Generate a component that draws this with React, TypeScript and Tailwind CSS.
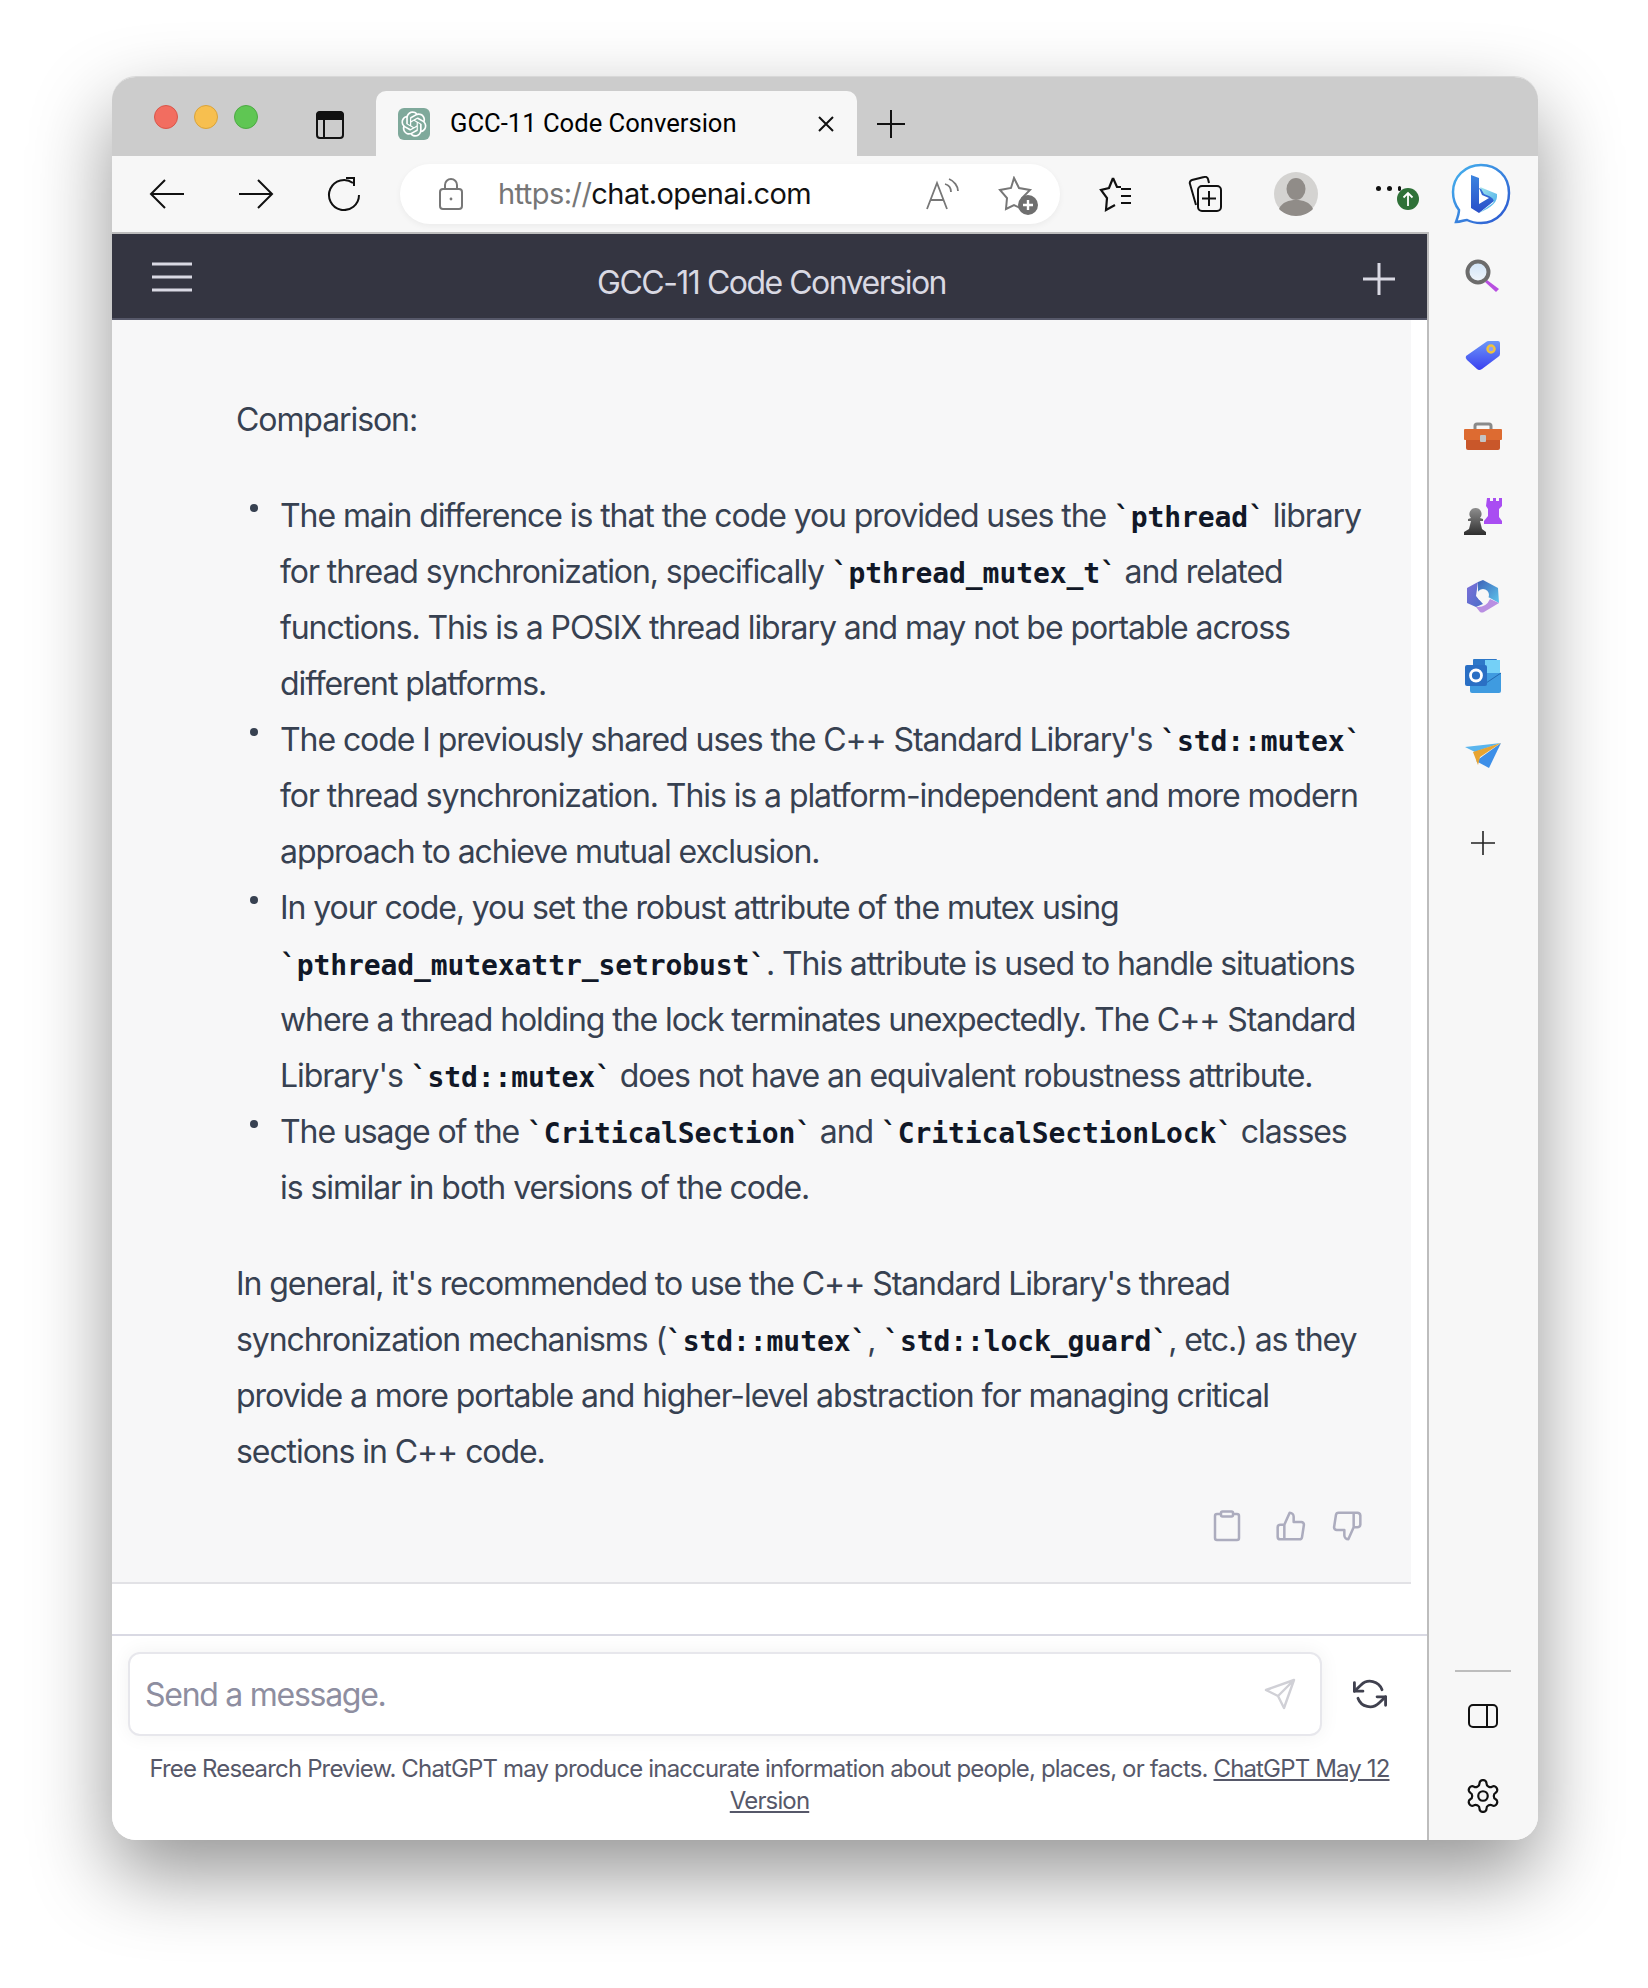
import type { ReactNode } from "react";

const openAiPath =
  "M37.5324 16.8707C37.9808 15.5241 38.1363 14.0974 37.9886 12.6859C37.8409 11.2744 37.3934 9.91076 36.676 8.68622C35.6126 6.83404 33.9882 5.3676 32.0373 4.4985C30.0864 3.62941 27.9098 3.40259 25.8215 3.85078C24.8796 2.7893 23.7219 1.94125 22.4257 1.36341C21.1295 0.785575 19.7249 0.491269 18.3058 0.500197C16.1708 0.495044 14.0893 1.16803 12.3614 2.42214C10.6335 3.67624 9.34853 5.44666 8.6917 7.47815C7.30085 7.76286 5.98686 8.3414 4.8377 9.17505C3.68854 10.0087 2.73073 11.0782 2.02839 12.312C0.956464 14.1591 0.498905 16.2988 0.721698 18.4228C0.944492 20.5467 1.83612 22.5449 3.268 24.1293C2.81966 25.4759 2.66413 26.9026 2.81182 28.3141C2.95951 29.7256 3.40701 31.0892 4.12437 32.3138C5.18791 34.1659 6.8123 35.6322 8.76321 36.5013C10.7141 37.3704 12.8907 37.5973 14.9789 37.1492C15.9208 38.2107 17.0786 39.0587 18.3747 39.6366C19.6709 40.2144 21.0755 40.5087 22.4946 40.4998C24.6307 40.5054 26.7133 39.8321 28.4418 38.5772C30.1704 37.3223 31.4556 35.5506 32.1119 33.5179C33.5027 33.2332 34.8167 32.6547 35.9659 31.821C37.115 30.9874 38.0728 29.9178 38.7752 28.684C39.8458 26.8371 40.3023 24.6979 40.0789 22.5748C39.8556 20.4517 38.9639 18.4544 37.5324 16.8707ZM22.4978 37.8849C20.7443 37.8874 19.0459 37.2733 17.6994 36.1501C17.7601 36.117 17.8666 36.0586 17.936 36.0161L25.9004 31.4156C26.1003 31.3019 26.2663 31.137 26.3813 30.9378C26.4964 30.7386 26.5563 30.5124 26.5549 30.2825V19.0542L29.9213 20.998C29.9389 21.0068 29.9541 21.0198 29.9656 21.0359C29.977 21.052 29.9842 21.0707 29.9867 21.0902V30.3889C29.9842 32.375 29.1946 34.2791 27.7909 35.6841C26.3872 37.0892 24.4838 37.8806 22.4978 37.8849ZM6.39227 31.0064C5.51397 29.4888 5.19742 27.7107 5.49804 25.9832C5.55718 26.0187 5.66048 26.0818 5.73461 26.1244L13.699 30.7248C13.8975 30.8408 14.1233 30.902 14.3532 30.902C14.583 30.902 14.8088 30.8408 15.0073 30.7248L24.731 25.1103V28.9979C24.7321 29.0177 24.7283 29.0376 24.7199 29.0556C24.7115 29.0736 24.6988 29.0893 24.6829 29.1012L16.6317 33.7497C14.9096 34.7416 12.8643 35.0097 10.9447 34.4954C9.02506 33.9811 7.38785 32.7263 6.39227 31.0064ZM4.29707 13.6194C5.17156 12.0998 6.55279 10.9364 8.19885 10.3327C8.19885 10.4013 8.19491 10.5228 8.19491 10.6071V19.808C8.19351 20.0378 8.25334 20.2638 8.36823 20.4629C8.48312 20.6619 8.64893 20.8267 8.84863 20.9404L18.5723 26.5542L15.206 28.4979C15.1894 28.5089 15.1703 28.5155 15.1505 28.5173C15.1307 28.5191 15.1107 28.516 15.0924 28.5082L7.04046 23.8557C5.32135 22.8601 4.06716 21.2235 3.55289 19.3046C3.03862 17.3858 3.30624 15.3413 4.29707 13.6194ZM31.955 20.0556L22.2312 14.4411L25.5976 12.4981C25.6142 12.4872 25.6333 12.4805 25.6531 12.4787C25.6729 12.4769 25.6928 12.4801 25.7111 12.4879L33.7631 17.1364C34.9967 17.849 36.0017 18.8982 36.6606 20.1613C37.3194 21.4244 37.6047 22.849 37.4832 24.2684C37.3617 25.6878 36.8382 27.0432 35.9743 28.1759C35.1103 29.3086 33.9415 30.1717 32.6047 30.6641C32.6047 30.5947 32.6047 30.4733 32.6047 30.3889V21.188C32.6066 20.9586 32.5474 20.7328 32.4332 20.5338C32.319 20.3348 32.154 20.1698 31.955 20.0556ZM35.3055 15.0128C35.2464 14.9765 35.1431 14.9142 35.069 14.8717L27.1045 10.2712C26.906 10.1554 26.6803 10.0943 26.4504 10.0943C26.2206 10.0943 25.9948 10.1554 25.7963 10.2712L16.0726 15.8858V11.9982C16.0715 11.9783 16.0753 11.9585 16.0837 11.9405C16.0921 11.9225 16.1048 11.9068 16.1207 11.8949L24.1719 7.25025C25.4053 6.53903 26.8158 6.19376 28.2383 6.25482C29.6608 6.31589 31.0364 6.78077 32.2044 7.59508C33.3723 8.40939 34.2842 9.53945 34.8334 10.8531C35.3826 12.1667 35.5464 13.6095 35.3055 15.0128ZM14.2424 21.9419L10.8752 19.9981C10.8576 19.9893 10.8423 19.9763 10.8309 19.9602C10.8195 19.9441 10.8122 19.9254 10.8098 19.9058V10.6071C10.8107 9.18295 11.2173 7.78848 11.9819 6.58696C12.7466 5.38544 13.8377 4.42659 15.1275 3.82264C16.4173 3.21869 17.8524 2.99464 19.2649 3.1767C20.6775 3.35876 22.0089 3.93941 23.1034 4.85067C23.0427 4.88379 22.937 4.94215 22.8668 4.98473L14.9024 9.58517C14.7025 9.69878 14.5366 9.86356 14.4215 10.0626C14.3065 10.2616 14.2466 10.4877 14.2479 10.7175L14.2424 21.9419ZM16.071 17.9991L20.4018 15.4978L24.7325 17.9975V22.9985L20.4018 25.4983L16.071 22.9985V17.9991Z";

function Code({ children }: { children: ReactNode }) {
  return (
    <code className="font-['DejaVu_Sans_Mono',monospace] text-[28px] font-bold leading-[1] tracking-[-0.1px] text-[#111827]">
      `{children}`
    </code>
  );
}

function Bullet({ children }: { children: ReactNode }) {
  return (
    <li className="relative whitespace-nowrap">
      <span className="absolute left-[-30px] top-[16px] h-2 w-2 rounded-full bg-[#374151]" />
      {children}
    </li>
  );
}

function Slot({ w, children }: { w: number; children: ReactNode }) {
  return (
    <div className="flex shrink-0 items-center justify-center" style={{ width: w }}>
      {children}
    </div>
  );
}

function Toolbar() {
  return (
    <div className="flex h-[76px] items-center bg-[#f7f7f7] pl-[20px]">
      <Slot w={70}>
        <svg width="36" height="30" viewBox="0 0 36 30" fill="none" stroke="#111" strokeWidth="2">
          <path d="M35 15H2M16 1 2 15l14 14" />
        </svg>
      </Slot>
      <Slot w={108}>
        <svg width="36" height="30" viewBox="0 0 36 30" fill="none" stroke="#111" strokeWidth="2">
          <path d="M1 15h33M20 1l14 14-14 14" />
        </svg>
      </Slot>
      <Slot w={68}>
        <svg width="34" height="34" viewBox="0 0 34 34" fill="none" stroke="#111" strokeWidth="2">
          <path d="M26 6A15 15 0 1 0 32 18" />
          <path d="M19 1h8v8" />
        </svg>
      </Slot>
      <div className="ml-[22px] flex h-[60px] w-[660px] shrink-0 items-center rounded-full bg-white shadow-[0_2px_6px_rgba(0,0,0,0.05)]">
        <div className="ml-[38px] flex w-[26px] justify-center">
          <svg width="24" height="32" viewBox="0 0 24 32" fill="none" stroke="#777" strokeWidth="2">
            <rect x="1" y="11" width="22" height="20" rx="3" />
            <path d="M6 11V7a6 6 0 0 1 12 0v4" />
            <circle cx="12" cy="21" r="1.4" fill="#777" stroke="none" />
          </svg>
        </div>
        <div className="ml-[34px] font-['Inter',sans-serif] text-[29px] tracking-[-0.55px] text-[#111]">
          <span className="text-[#767676]">https://</span>chat.openai.com
        </div>
        <div className="ml-auto flex items-center">
          <svg width="34" height="34" viewBox="0 0 34 34" fill="none" stroke="#777" strokeWidth="1.8">
            <path d="M1 32 11 6l10 26M5 23h12" />
            <path d="M19 7c4 1 6 4 6 8M23 2c5 2 9 7 9 12" />
          </svg>
          <div className="relative ml-[38px] mr-[26px] h-[36px] w-[36px]">
            <svg width="36" height="36" viewBox="0 0 36 36" fill="none" stroke="#777" strokeWidth="2">
              <path d="M16 2l5 10 11 2-8 8 2 12-10-5-8 4 1-11-7-8 11-2z" />
            </svg>
            <svg className="absolute bottom-[-3px] right-[-4px]" width="20" height="20" viewBox="0 0 20 20">
              <circle cx="10" cy="10" r="10" fill="#6f6f6f" />
              <path d="M10 5v10M5 10h10" stroke="#fff" strokeWidth="2.4" />
            </svg>
          </div>
        </div>
      </div>
      <Slot w={114}>
        <svg width="36" height="36" viewBox="0 0 36 36" fill="none" stroke="#111" strokeWidth="2.2">
          <path d="M14 2l4 9h4M14 2l-4 10-8 2 6 8-1 12 9-5M22 13h10M22 20h10M22 27h10" />
        </svg>
      </Slot>
      <Slot w={62}>
        <svg width="36" height="36" viewBox="0 0 36 36" fill="none" stroke="#111" strokeWidth="2">
          <path d="M9 29 3 8a3 3 0 0 1 2-4l12-3a3 3 0 0 1 4 2l1 4" />
          <rect x="11" y="10" width="23" height="25" rx="4" />
          <path d="M22 15v15M15 22.500h14" />
        </svg>
      </Slot>
      <Slot w={120}>
        <svg width="44" height="44" viewBox="0 0 44 44">
          <circle cx="22" cy="22" r="22" fill="#d4d3d1" />
          <ellipse cx="22" cy="17" rx="9.500" ry="11" fill="#908c88" />
          <path d="M5 37c3-7 10-9 17-9s14 2 17 9c-4 4-10 7-17 7S9 41 5 37z" fill="#908c88" />
        </svg>
      </Slot>
      <Slot w={78}>
        <div className="relative h-[36px] w-[44px]">
          <div className="absolute left-[3px] top-[10px] flex gap-[6px]">
            <span className="h-[5px] w-[5px] rounded-full bg-[#111]" />
            <span className="h-[5px] w-[5px] rounded-full bg-[#111]" />
            <span className="h-[5px] w-[3px] rounded-full bg-[#111]" />
          </div>
          <svg className="absolute left-[24px] top-[12px]" width="22" height="22" viewBox="0 0 22 22">
            <circle cx="11" cy="11" r="11" fill="#2f7138" />
            <path d="M11 18V5M6.500 9.500 11 5l4.500 4.500" stroke="#fff" strokeWidth="1.8" fill="none" />
          </svg>
        </div>
      </Slot>
      <Slot w={94}>
        <svg width="62" height="62" viewBox="0 0 62 62" fill="none">
          <defs>
            <linearGradient id="bubble" x1="0" y1="0" x2="1" y2="1">
              <stop offset="0" stopColor="#46b4ee" />
              <stop offset="1" stopColor="#2c55cf" />
            </linearGradient>
            <linearGradient id="bingB" x1="0" y1="0" x2="0" y2="1">
              <stop offset="0" stopColor="#3b84e0" />
              <stop offset="1" stopColor="#2a4fc8" />
            </linearGradient>
            <linearGradient id="bingC" x1="0" y1="0" x2="1" y2="1">
              <stop offset="0" stopColor="#a5e6ea" />
              <stop offset="1" stopColor="#3fa8ec" />
            </linearGradient>
          </defs>
          <path
            d="M31 2C15 2 3 14 3 29c0 7 2 13 6 18 0 4-2 9-3 12 5 0 8-2 11-2 4 2 9 3 14 3 16 0 28-13 28-30S47 2 31 2z"
            fill="#fff"
            stroke="url(#bubble)"
            strokeWidth="2.5"
          />
          <path d="M21 12l8 3v26l10-6-7-3-3-7 15 6v7L29 50l-8-5z" fill="url(#bingB)" />
          <path d="M30 24l17 7c1 8-5 13-18 19l14-10c2-3 0-6-9-9z" fill="url(#bingC)" />
        </svg>
      </Slot>
    </div>
  );
}

function SideIcon({ children }: { children: ReactNode }) {
  return <div className="flex h-[80px] items-center justify-center">{children}</div>;
}

function Sidebar() {
  return (
    <aside className="flex w-[111px] shrink-0 flex-col items-stretch border-l-[2px] border-[#bdbdbd] bg-[#f7f7f7] pr-[1px] pt-[4px]">
      <SideIcon>
        <svg width="36" height="34" viewBox="0 0 36 34">
          <defs>
            <linearGradient id="lens" x1="0" y1="0" x2="0" y2="1">
              <stop offset="0" stopColor="#cfe3f7" />
              <stop offset="1" stopColor="#f1f6fb" />
            </linearGradient>
          </defs>
          <path d="M22 21l12 9-3 3-11-10z" fill="#b84fe0" />
          <circle cx="13" cy="13" r="10.500" fill="url(#lens)" stroke="#6c6c6c" strokeWidth="4" />
        </svg>
      </SideIcon>
      <SideIcon>
        <svg width="36" height="32" viewBox="0 0 36 32">
          <defs>
            <linearGradient id="tag" x1="0" y1="0" x2="0" y2="1">
              <stop offset="0" stopColor="#6c97f8" />
              <stop offset="1" stopColor="#3a3ff0" />
            </linearGradient>
          </defs>
          <path d="M1 16 21 2q1-1 3-1h9q2 0 2 2v11q0 2-2 3L17 29q-3 2-5 0L2 20q-2-2-1-4z" fill="url(#tag)" />
          <circle cx="26" cy="9" r="3.500" fill="#8ea0f5" stroke="#eec23d" strokeWidth="2.500" />
        </svg>
      </SideIcon>
      <SideIcon>
        <svg width="38" height="28" viewBox="0 0 38 28">
          <path d="M11 8V4q0-2 2-2h12q2 0 2 2v4" fill="none" stroke="#8a8a8a" strokeWidth="3" />
          <rect x="2" y="14" width="34" height="14" rx="2" fill="#c9572a" />
          <rect x="0" y="7" width="38" height="11" rx="1" fill="#dd6b31" />
          <rect x="16" y="13" width="6" height="7" rx="1" fill="#c4c4c4" />
        </svg>
      </SideIcon>
      <SideIcon>
        <svg width="40" height="40" viewBox="0 0 40 40">
          <defs>
            <linearGradient id="pawn" x1="0" y1="0" x2="0" y2="1">
              <stop offset="0" stopColor="#8f8f8f" />
              <stop offset="1" stopColor="#2e2e2e" />
            </linearGradient>
          </defs>
          <path d="M24 2h3v3h3V2h3v3h3V2h3v8l-3 3v8l3 4v3H21v-3l4-5v-7l-2-3z" fill="#a94df2" />
          <path d="M13 12a6 6 0 0 1 4 10l3 1v2h-3l2 8 4 3v3H1v-3l5-3 2-8H5v-2l3-1a6 6 0 0 1 5-10z" fill="url(#pawn)" />
        </svg>
      </SideIcon>
      <SideIcon>
        <svg width="34" height="34" viewBox="0 0 34 34">
          <defs>
            <linearGradient id="m1" x1="0" y1="0" x2="1" y2="1">
              <stop offset="0" stopColor="#7d6fd8" />
              <stop offset="1" stopColor="#4a6ec9" />
            </linearGradient>
            <linearGradient id="m2" x1="0" y1="0" x2="1" y2="1">
              <stop offset="0" stopColor="#3d62b8" />
              <stop offset="1" stopColor="#5dc6ec" />
            </linearGradient>
          </defs>
          <path d="M12 3 1 9v15l9 4 7-3-7-8z" fill="url(#m1)" />
          <path d="M12 3l5-2 15 8 1 15-9-5-8-4-4 1z" fill="url(#m2)" />
          <path d="M33 24l-15 9q-2 1-4 0l-4-5q10 1 14-8z" fill="#b98fe2" />
          <circle cx="17" cy="16" r="6" fill="#f7f7f7" />
        </svg>
      </SideIcon>
      <SideIcon>
        <svg width="36" height="34" viewBox="0 0 36 34">
          <rect x="8" y="0" width="24" height="16" rx="1" fill="#2d78c8" />
          <rect x="20" y="1" width="15" height="15" fill="#74d0f7" />
          <path d="M5 14h31v18q0 2-2 2H7q-2 0-2-2z" fill="#3f9be0" />
          <path d="M5 14l16 10 15-10" fill="none" stroke="#2368b0" strokeWidth="1" />
          <rect x="0" y="6" width="22" height="21" rx="2" fill="#2a6fc4" />
          <circle cx="11" cy="16.500" r="5.500" fill="none" stroke="#fff" strokeWidth="2.800" />
        </svg>
      </SideIcon>
      <SideIcon>
        <svg width="36" height="26" viewBox="0 0 36 26">
          <path d="M0 4 36 0 10 9z" fill="#5ab5ee" />
          <path d="M36 0 24 25l-13-7z" fill="#3d8fe8" />
          <path d="M36 0 8 9l5 13 2-8z" fill="#e8a431" />
        </svg>
      </SideIcon>
      <div className="flex h-[94px] items-center justify-center">
        <svg width="24" height="24" viewBox="0 0 24 24" stroke="#222" strokeWidth="1.600">
          <path d="M12 0v24M0 12h24" />
        </svg>
      </div>
      <div className="mt-auto flex flex-col items-center pb-[8px]">
        <div className="h-[2px] w-[56px] bg-[#bdbdbd]" />
        <div className="flex h-[88px] items-center justify-center">
          <svg width="30" height="24" viewBox="0 0 30 24" fill="none" stroke="#111" strokeWidth="2">
            <rect x="1" y="1" width="28" height="22" rx="4" />
            <path d="M19 1v22" />
          </svg>
        </div>
        <div className="flex h-[72px] items-center justify-center">
          <svg width="38" height="38" viewBox="0 0 24 24" fill="none" stroke="#111" strokeWidth="1.400">
            <path d="M12.220 2h-.44a2 2 0 0 0-2 2v.18a2 2 0 0 1-1 1.730l-.43.25a2 2 0 0 1-2 0l-.15-.08a2 2 0 0 0-2.730.73l-.22.38a2 2 0 0 0 .73 2.730l.15.1a2 2 0 0 1 1 1.720v.510a2 2 0 0 1-1 1.740l-.15.09a2 2 0 0 0-.73 2.730l.22.38a2 2 0 0 0 2.730.73l.15-.08a2 2 0 0 1 2 0l.43.25a2 2 0 0 1 1 1.730V20a2 2 0 0 0 2 2h.44a2 2 0 0 0 2-2v-.18a2 2 0 0 1 1-1.730l.43-.25a2 2 0 0 1 2 0l.15.08a2 2 0 0 0 2.730-.73l.22-.39a2 2 0 0 0-.73-2.730l-.15-.08a2 2 0 0 1-1-1.740v-.5a2 2 0 0 1 1-1.740l.15-.09a2 2 0 0 0 .73-2.730l-.22-.38a2 2 0 0 0-2.730-.73l-.15.08a2 2 0 0 1-2 0l-.43-.25a2 2 0 0 1-1-1.730V4a2 2 0 0 0-2-2z" />
            <circle cx="12" cy="12" r="3" />
          </svg>
        </div>
      </div>
    </aside>
  );
}

function Article() {
  return (
    <div className="mr-[16px] flex h-[1264px] flex-col border-b-[2px] border-[#e2e2e6] bg-[#f7f7f8] pl-[124px] pt-[72px] text-[32px] leading-[56px] tracking-[-1.08px] text-[#374151]">
      <p>Comparison:</p>
      <ul className="mt-[40px] pl-[44px]">
        <Bullet>
          The main difference is that the code you provided uses the <Code>pthread</Code> library
          <br />
          for thread synchronization, specifically <Code>pthread_mutex_t</Code> and related
          <br />
          functions. This is a POSIX thread library and may not be portable across
          <br />
          different platforms.
        </Bullet>
        <Bullet>
          The code I previously shared uses the C++ Standard Library's <Code>std::mutex</Code>
          <br />
          for thread synchronization. This is a platform-independent and more modern
          <br />
          approach to achieve mutual exclusion.
        </Bullet>
        <Bullet>
          In your code, you set the robust attribute of the mutex using
          <br />
          <Code>pthread_mutexattr_setrobust</Code>. This attribute is used to handle situations
          <br />
          where a thread holding the lock terminates unexpectedly. The C++ Standard
          <br />
          Library's <Code>std::mutex</Code> does not have an equivalent robustness attribute.
        </Bullet>
        <Bullet>
          The usage of the <Code>CriticalSection</Code> and <Code>CriticalSectionLock</Code> classes
          <br />
          is similar in both versions of the code.
        </Bullet>
      </ul>
      <p className="mt-[40px] whitespace-nowrap">
        In general, it's recommended to use the C++ Standard Library's thread
        <br />
        synchronization mechanisms (<Code>std::mutex</Code>, <Code>std::lock_guard</Code>, etc.) as they
        <br />
        provide a more portable and higher-level abstraction for managing critical
        <br />
        sections in C++ code.
      </p>
      <div className="mt-[30px] flex items-center pl-[977px]">
        <svg width="28" height="32" viewBox="0 0 28 32" fill="none" stroke="#acacbe" strokeWidth="2.500">
          <rect x="2" y="4" width="24" height="26" rx="2" />
          <rect x="8" y="1.500" width="12" height="5" rx="1.500" fill="#f7f7f8" />
        </svg>
        <svg className="ml-[34px]" width="32" height="32" viewBox="0 0 24 24" fill="none" stroke="#acacbe" strokeWidth="1.900" strokeLinecap="round" strokeLinejoin="round">
          <path d="M14 9V5a3 3 0 0 0-3-3l-4 9v11h11.280a2 2 0 0 0 2-1.700l1.380-9a2 2 0 0 0-2-2.300zM7 22H4a2 2 0 0 1-2-2v-7a2 2 0 0 1 2-2h3" />
        </svg>
        <svg className="ml-[24px]" width="32" height="32" viewBox="0 0 24 24" fill="none" stroke="#acacbe" strokeWidth="1.900" strokeLinecap="round" strokeLinejoin="round">
          <path d="M10 15v4a3 3 0 0 0 3 3l4-9V2H5.720a2 2 0 0 0-2 1.700l-1.380 9a2 2 0 0 0 2 2.300zm7-13h2.670A2.310 2.310 0 0 1 22 4v7a2.310 2.310 0 0 1-2.330 2H17" />
        </svg>
      </div>
    </div>
  );
}

function Composer() {
  return (
    <div className="flex-1 border-t-[2px] border-[#d9d9e3] bg-white">
      <div className="flex items-center pl-[16px] pt-[16px]">
        <div className="flex h-[84px] w-[1194px] items-center justify-between rounded-[12px] border-[2px] border-[#e7e7ec] bg-white pl-[15px] pr-[24px] text-[32px] tracking-[-1.27px] text-[#8e8ea0] shadow-[0_0_20px_rgba(0,0,0,0.06)]">
          <span className="pt-[2px]">Send a message.</span>
          <svg width="32" height="32" viewBox="0 0 32 32" fill="none" stroke="#d0d0d6" strokeWidth="2.400" strokeLinejoin="round">
            <path d="M30 2 2 12l12 6 6 12zM30 2 14 18" />
          </svg>
        </div>
        <svg className="ml-[30px]" width="36" height="34" viewBox="0 0 24 24" fill="none" stroke="#40414f" strokeWidth="2" strokeLinecap="round" strokeLinejoin="round">
          <path d="M1 4v6h6M23 20v-6h-6" />
          <path d="M20.490 9A9 9 0 0 0 5.640 5.640L1 10m22 4-4.640 4.360A9 9 0 0 1 3.510 15" />
        </svg>
      </div>
      <p className="pt-[17px] text-center text-[24px] leading-[32px] tracking-[-0.85px] text-[#565869]">
        Free Research Preview. ChatGPT may produce inaccurate information about people, places, or facts.{" "}
        <span className="underline">
          ChatGPT May 12
          <br />
          Version
        </span>
      </p>
    </div>
  );
}

export default function App() {
  return (
    <div className="h-[1988px] w-[1648px] overflow-hidden bg-white pl-[112px] pt-[76px] font-['Inter',sans-serif]">
      <div className="flex h-[1764px] w-[1426px] flex-col overflow-hidden rounded-[24px] border-t border-[#d8d8d8] bg-white shadow-[0_34px_80px_rgba(0,0,0,0.42)]">
        <div className="flex h-[79px] shrink-0 items-end bg-[#cccccc]">
          <div className="flex h-[79px] w-[264px] shrink-0 items-start pt-[28px]">
            <span className="ml-[42px] h-6 w-6 rounded-full border border-[#d9564a] bg-[#f26d60]" />
            <span className="ml-[16px] h-6 w-6 rounded-full border border-[#d9a33a] bg-[#f7bf4f]" />
            <span className="ml-[16px] h-6 w-6 rounded-full border border-[#4da944] bg-[#5fc653]" />
            <svg className="ml-[58px] mt-[6px]" width="28" height="28" viewBox="0 0 28 28" fill="none" stroke="#111" strokeWidth="2">
              <rect x="1" y="1" width="26" height="26" rx="3" />
              <path d="M1 5a4 4 0 0 1 4-4h18a4 4 0 0 1 4 4v3H1z" fill="#111" />
              <path d="M8 8v19" />
            </svg>
          </div>
          <div className="flex h-[65px] w-[481px] shrink-0 items-center rounded-t-[10px] bg-[#f7f7f7] pl-[22px] pr-[22px]">
            <div className="flex h-8 w-8 items-center justify-center rounded-[6px] bg-[#7fa99b]">
              <svg width="26" height="26" viewBox="0 0 41 41" fill="#fff">
                <path d={openAiPath} />
              </svg>
            </div>
            <span className="ml-[20px] font-['Roboto',sans-serif] text-[25.6px] text-black">GCC-11 Code Conversion</span>
            <svg className="ml-auto" width="18" height="18" viewBox="0 0 18 18" stroke="#111" strokeWidth="2">
              <path d="M2 2l14 14M16 2 2 16" />
            </svg>
          </div>
          <div className="flex h-[65px] items-center pl-[19px]">
            <svg width="30" height="30" viewBox="0 0 30 30" stroke="#111" strokeWidth="2">
              <path d="M15 1v28M1 15h28" />
            </svg>
          </div>
        </div>
        <Toolbar />
        <div className="flex min-h-0 flex-1">
          <main className="flex min-w-0 flex-1 flex-col border-t-[2px] border-[#bdbdbd]">
            <header className="flex h-[86px] shrink-0 items-center border-b-[2px] border-[#565869] bg-[#343541] pl-[40px] pr-[32px] text-[#d9d9e3]">
              <svg className="mt-[2px]" width="40" height="30" viewBox="0 0 40 30" stroke="#d9d9e3" strokeWidth="3">
                <path d="M0 2h40M0 15h40M0 28h40" />
              </svg>
              <span className="flex-1 pr-[12px] pt-[14px] text-center text-[32px] tracking-[-1.5px]">GCC-11 Code Conversion</span>
              <svg className="mt-[6px]" width="32" height="32" viewBox="0 0 32 32" stroke="#d9d9e3" strokeWidth="3">
                <path d="M16 0v32M0 16h32" />
              </svg>
            </header>
            <Article />
            <div className="h-[50px] shrink-0 bg-white" />
            <Composer />
          </main>
          <Sidebar />
        </div>
      </div>
    </div>
  );
}
